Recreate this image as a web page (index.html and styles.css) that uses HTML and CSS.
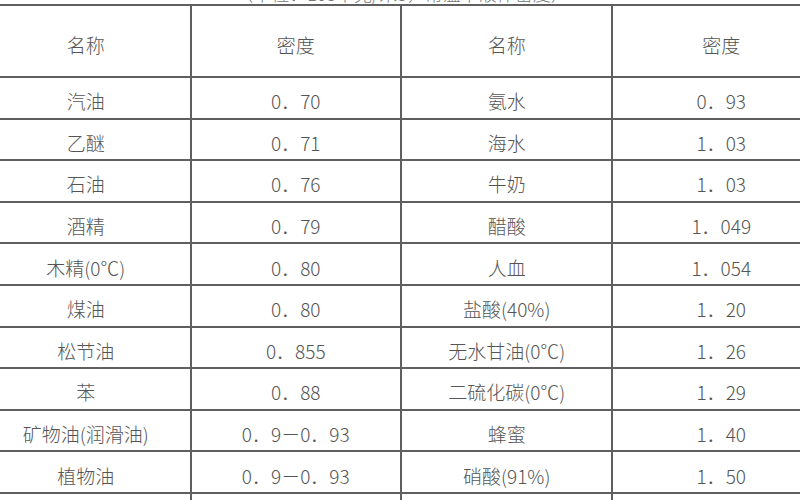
FILE: index.html
```html
<!DOCTYPE html>
<html lang="zh">
<head>
<meta charset="utf-8">
<link rel="stylesheet" href="styles.css">
</head>
<body>
<div class="page">
  <div class="title">（单位：103千克/米3，常温下液体密度）</div>
  <table class="density">
    <colgroup>
      <col class="c1"><col class="c2"><col class="c3"><col class="c4">
    </colgroup>
    <thead>
      <tr><th>名称</th><th>密度</th><th>名称</th><th>密度</th></tr>
    </thead>
    <tbody>
      <tr><td>汽油</td><td>0．70</td><td>氨水</td><td>0．93</td></tr>
      <tr><td>乙醚</td><td>0．71</td><td>海水</td><td>1．03</td></tr>
      <tr><td>石油</td><td>0．76</td><td>牛奶</td><td>1．03</td></tr>
      <tr><td>酒精</td><td>0．79</td><td>醋酸</td><td>1．049</td></tr>
      <tr><td>木精(0℃)</td><td>0．80</td><td>人血</td><td>1．054</td></tr>
      <tr><td>煤油</td><td>0．80</td><td>盐酸(40%)</td><td>1．20</td></tr>
      <tr><td>松节油</td><td>0．855</td><td>无水甘油(0℃)</td><td>1．26</td></tr>
      <tr><td>苯</td><td>0．88</td><td>二硫化碳(0℃)</td><td>1．29</td></tr>
      <tr><td>矿物油(润滑油)</td><td>0．9－0．93</td><td>蜂蜜</td><td>1．40</td></tr>
      <tr><td>植物油</td><td>0．9－0．93</td><td>硝酸(91%)</td><td>1．50</td></tr>
      <tr><td>&nbsp;</td><td>&nbsp;</td><td>&nbsp;</td><td>&nbsp;</td></tr>
    </tbody>
  </table>
</div>
</body>
</html>
```

FILE: styles.css
```css
html, body {
  margin: 0;
  padding: 0;
  background: #ffffff;
  overflow: hidden;
  width: 800px;
  height: 500px;
}
.page {
  margin-left: -20px;
  margin-top: -17px;
  width: 851px;
  font-family: "Noto Sans CJK SC", "Noto Sans", sans-serif;
  color: #555555;
  font-size: 19px;
  font-weight: 300;
}
.title {
  text-align: center;
  width: 844px;
  height: 21px;
  line-height: 21px;
  font-size: 18px;
  color: #777777;
}
.density {
  border-collapse: collapse;
  table-layout: fixed;
  width: 851px;
}
.density th, .density td {
  border: 2px solid #5f5f5f;
  text-align: center;
  font-weight: 300;
  padding: 0;
  line-height: 20px;
}
.density thead th {
  padding-top: 8px;
}
.density tbody td {
  padding-top: 7px;
}
.density thead tr {
  height: 72px;
}
.density tbody tr {
  height: 41.6px;
}
.c1 { width: 24.68%; }
.c2 { width: 24.79%; }
.c3 { width: 24.91%; }
.c4 { width: 25.62%; }
```
